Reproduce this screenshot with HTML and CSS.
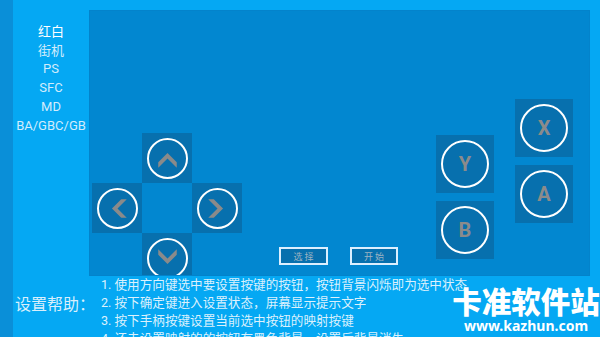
FILE: index.html
```html
<!DOCTYPE html>
<html lang="zh">
<head>
<meta charset="utf-8">
<title>按键设置</title>
<link rel="stylesheet" href="styles.css">
</head>
<body>
<div class="app">
  <div class="strip"></div>
  <div class="content">
    <div class="top">
      <ul class="menu">
        <li class="active">红白</li>
        <li>街机</li>
        <li>PS</li>
        <li>SFC</li>
        <li>MD</li>
        <li>BA/GBC/GB</li>
      </ul>
      <div class="panel">
        <div class="dpad">
          <div class="cell"></div>
          <div class="key"><span class="ring small"><svg viewBox="0 0 40 40"><polygon points="10,24 20,14 30,24 30,30 20,20 10,30"/></svg></span></div>
          <div class="cell"></div>
          <div class="key"><span class="ring small"><svg viewBox="0 0 40 40"><polygon points="24,10 14,20 24,30 30,30 20,20 30,10"/></svg></span></div>
          <div class="cell"></div>
          <div class="key"><span class="ring small"><svg viewBox="0 0 40 40"><polygon points="16,10 26,20 16,30 10,30 20,20 10,10"/></svg></span></div>
          <div class="cell"></div>
          <div class="key"><span class="ring small"><svg viewBox="0 0 40 40"><polygon points="10,16 20,26 30,16 30,10 20,20 10,10"/></svg></span></div>
          <div class="cell"></div>
        </div>
        <div class="sysbtns">
          <div class="sys">选 择</div>
          <div class="sys">开 始</div>
        </div>
        <div class="face face-left">
          <div class="fkey"><span class="ring big">Y</span></div>
          <div class="fkey"><span class="ring big">B</span></div>
        </div>
        <div class="face face-right">
          <div class="fkey"><span class="ring big">X</span></div>
          <div class="fkey"><span class="ring big">A</span></div>
        </div>
      </div>
    </div>
    <div class="help">
      <div class="help-label">设置帮助：</div>
      <ol class="help-list">
        <li>1. 使用方向键选中要设置按键的按钮，按钮背景闪烁即为选中状态</li>
        <li>2. 按下确定键进入设置状态，屏幕显示提示文字</li>
        <li>3. 按下手柄按键设置当前选中按钮的映射按键</li>
        <li>4. 还未设置映射的的按钮有黑色背景，设置后背景消失</li>
      </ol>
    </div>
  </div>
  <div class="watermark">
    <div class="wm-title">卡准软件站</div>
    <div class="wm-url">www.kazhun.com</div>
  </div>
</div>
</body>
</html>
```
FILE: styles.css
```css
* { box-sizing: border-box; }
html, body { margin: 0; padding: 0; }
body {
  width: 600px;
  height: 337px;
  overflow: hidden;
  font-family: Roboto, "Noto Sans CJK SC", sans-serif;
}
.app {
  position: relative;
  display: flex;
  width: 600px;
  height: 337px;
  overflow: hidden;
  background: #05a8f3;
}
.strip {
  width: 13px;
  flex: none;
  background: #0a8fd8;
}
.content {
  flex: 1;
  display: flex;
  flex-direction: column;
}
.top {
  display: flex;
  height: 276px;
  padding-top: 10px;
  flex: none;
}
.menu {
  list-style: none;
  margin: 0;
  padding: 13px 0 0;
  width: 76px;
  flex: none;
  text-align: center;
  font-size: 13px;
  line-height: 18.7px;
  color: #d2ecfc;
}
.menu li { white-space: nowrap; }
.menu li.active { color: #ffffff; }
.panel {
  width: 501px;
  height: 266px;
  flex: none;
  background: #0287d0;
  border: 1px solid #0383cb;
  overflow: hidden;
  display: flex;
  align-items: flex-start;
  padding-left: 2px;
}
.dpad {
  display: grid;
  grid-template-columns: repeat(3, 50px);
  grid-template-rows: repeat(3, 50px);
  margin-top: 122px;
  flex: none;
}
.key {
  background: #0770ae;
  display: flex;
  align-items: center;
  justify-content: center;
}
.ring {
  border: 2px solid #ffffff;
  border-radius: 50%;
  display: flex;
  align-items: center;
  justify-content: center;
  flex: none;
}
.ring.small { width: 41px; height: 41px; }
.ring.small svg { width: 37px; height: 37px; fill: #8a8a8a; }
.ring.big {
  width: 48px;
  height: 48px;
  color: #8b8b8b;
  font-family: Roboto, "Liberation Sans", sans-serif;
  font-weight: 700;
  font-size: 20px;
}
.sysbtns {
  display: flex;
  gap: 22px;
  margin-left: 37px;
  margin-top: 236px;
  flex: none;
}
.sys {
  width: 49px;
  height: 18px;
  border: 2px solid #dcefff;
  background: #0770ae;
  color: #9db3c2;
  font-size: 9px;
  display: flex;
  align-items: center;
  justify-content: center;
  font-family: "Noto Sans CJK SC", sans-serif;
}
.sys + .sys { width: 48px; }
.face {
  display: flex;
  flex-direction: column;
  gap: 8px;
  flex: none;
}
.face-left { margin-left: 38px; margin-top: 124px; }
.face-right { margin-left: 21px; margin-top: 88px; }
.fkey {
  width: 58px;
  height: 58px;
  background: #0770ae;
  display: flex;
  align-items: center;
  justify-content: center;
}
.help {
  display: flex;
  align-items: flex-start;
  color: #dcf1fd;
}
.help-label {
  width: 88px;
  flex: none;
  padding-left: 2px;
  padding-top: 15px;
  font-size: 16px;
  line-height: 24px;
  font-family: "Noto Sans CJK SC", sans-serif;
  white-space: nowrap;
  color: #d9effc;
}
.help-list {
  list-style: none;
  margin: 0;
  padding: 0;
  font-size: 12.6px;
  line-height: 18px;
  white-space: nowrap;
}
.watermark {
  position: absolute;
  left: 452px;
  top: 282px;
  width: 148px;
  color: #ffffff;
  text-align: center;
}
.wm-title {
  font-family: "Noto Sans CJK SC", sans-serif;
  font-weight: 900;
  font-size: 29.5px;
  line-height: 36px;
  white-space: nowrap;
  letter-spacing: 0;
}
.wm-url {
  font-family: "Noto Sans", sans-serif;
  font-weight: 700;
  font-size: 14px;
  line-height: 16px;
  white-space: nowrap;
}
```
